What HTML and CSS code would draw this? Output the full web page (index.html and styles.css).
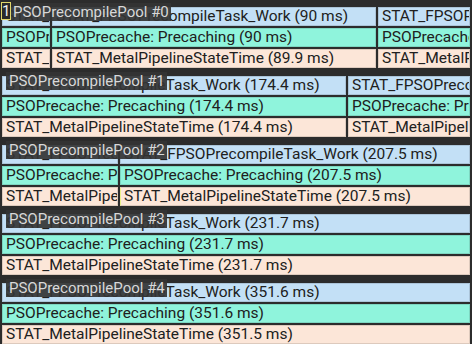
FILE: index.html
```html
<!DOCTYPE html>
<html>
  <head>
    <meta charset="UTF-8" />
    <title>PSO Precompile Timeline</title>
    <link rel="stylesheet" href="styles.css">
  </head>
  <body>
    <div class="timeline">
      <div class="pool">
        <span class="badge">1</span>
        <span class="pool-name first">PSOPrecompilePool #0</span>
        <div class="lane work">
          <div class="event" style="width: 48px">STAT_FPSOPrecompileTask_Work (90 ms)</div>
          <div class="event" style="width: 324px">STAT_FPSOPrecompileTask_Work (90 ms)</div>
          <div class="event last">STAT_FPSOPrecompileTask_Work (90 ms)</div>
        </div>
        <div class="lane precache">
          <div class="event" style="width: 48px">PSOPrecache: Precaching (90 ms)</div>
          <div class="event" style="width: 324px">PSOPrecache: Precaching (90 ms)</div>
          <div class="event last">PSOPrecache: Precaching (90 ms)</div>
        </div>
        <div class="lane metal">
          <div class="event" style="width: 48px">STAT_MetalPipelineStateTime (89.9 ms)</div>
          <div class="event" style="width: 324px">STAT_MetalPipelineStateTime (89.9 ms)</div>
          <div class="event last">STAT_MetalPipelineStateTime (89.9 ms)</div>
        </div>
      </div>

      <div class="pool">
        <span class="pool-name">PSOPrecompilePool #1</span>
        <div class="lane work">
          <div class="event" style="width: 344px">STAT_FPSOPrecompileTask_Work (174.4 ms)</div>
          <div class="event last">STAT_FPSOPrecompileTask_Work (174.4 ms)</div>
        </div>
        <div class="lane precache">
          <div class="event" style="width: 344px">PSOPrecache: Precaching (174.4 ms)</div>
          <div class="event last">PSOPrecache: Precaching (174.4 ms)</div>
        </div>
        <div class="lane metal">
          <div class="event" style="width: 344px">STAT_MetalPipelineStateTime (174.4 ms)</div>
          <div class="event last">STAT_MetalPipelineStateTime (174.4 ms)</div>
        </div>
      </div>

      <div class="pool">
        <span class="pool-name">PSOPrecompilePool #2</span>
        <div class="lane work">
          <div class="event" style="width: 116px">STAT_FPSOPrecompileTask_Work (207.5 ms)</div>
          <div class="event last">STAT_FPSOPrecompileTask_Work (207.5 ms)</div>
        </div>
        <div class="lane precache">
          <div class="event" style="width: 116px">PSOPrecache: Precaching (207.5 ms)</div>
          <div class="event last">PSOPrecache: Precaching (207.5 ms)</div>
        </div>
        <div class="lane metal split">
          <div class="event" style="width: 116px">STAT_MetalPipelineStateTime (207.5 ms)</div>
          <div class="event last">STAT_MetalPipelineStateTime (207.5 ms)</div>
        </div>
      </div>

      <div class="pool">
        <span class="pool-name">PSOPrecompilePool #3</span>
        <div class="lane work">
          <div class="event last">STAT_FPSOPrecompileTask_Work (231.7 ms)</div>
        </div>
        <div class="lane precache">
          <div class="event last">PSOPrecache: Precaching (231.7 ms)</div>
        </div>
        <div class="lane metal">
          <div class="event last">STAT_MetalPipelineStateTime (231.7 ms)</div>
        </div>
      </div>

      <div class="pool">
        <span class="pool-name">PSOPrecompilePool #4</span>
        <div class="lane work">
          <div class="event last">STAT_FPSOPrecompileTask_Work (351.6 ms)</div>
        </div>
        <div class="lane precache">
          <div class="event last">PSOPrecache: Precaching (351.6 ms)</div>
        </div>
        <div class="lane metal">
          <div class="event last">STAT_MetalPipelineStateTime (351.5 ms)</div>
        </div>
      </div>
    </div>
  </body>
</html>
```

FILE: styles.css
```css
body {
  font-family: Roboto, "Liberation Sans", sans-serif;
  background-color: #2c2c2c;
  margin: 0;
  padding: 0;
  overflow: hidden;
}

.timeline {
  width: 472px;
  height: 344px;
  padding: 0 2px;
  box-sizing: border-box;
  overflow: hidden;
}

.pool {
  position: relative;
  display: flex;
  flex-direction: column;
  gap: 2px;
  padding: 7px 0 1px;
}

.lane {
  display: flex;
  gap: 2px;
  height: 19px;
}

.event {
  flex: none;
  box-sizing: border-box;
  height: 19px;
  padding: 0 3px;
  font-size: 15.5px;
  line-height: 17px;
  color: #202020;
  white-space: nowrap;
  overflow: hidden;
  border: 1px solid rgba(0, 0, 0, 0.12);
}

.event.last {
  flex: 1;
}

.work .event {
  background-color: #c3e0f6;
}

.precache .event {
  background-color: #8ff4dc;
}

.metal .event {
  background-color: #fce6d8;
}

.split .event.last {
  border-left: 1px solid #eaf08a;
}

.pool-name {
  position: absolute;
  top: 3px;
  left: 4px;
  height: 18px;
  padding: 0 2px 0 3px;
  font-size: 15px;
  line-height: 18px;
  color: #d8d8d8;
  background-color: rgba(52, 52, 52, 0.92);
  z-index: 1;
}

.pool-name.first {
  left: 8px;
}

.badge {
  position: absolute;
  top: 2px;
  left: -1px;
  width: 10px;
  height: 18px;
  box-sizing: border-box;
  border: 1px solid #e0d66a;
  background-color: #2a2a2a;
  color: #f2f2f2;
  font-size: 15px;
  line-height: 16px;
  text-align: center;
  z-index: 2;
}
```
